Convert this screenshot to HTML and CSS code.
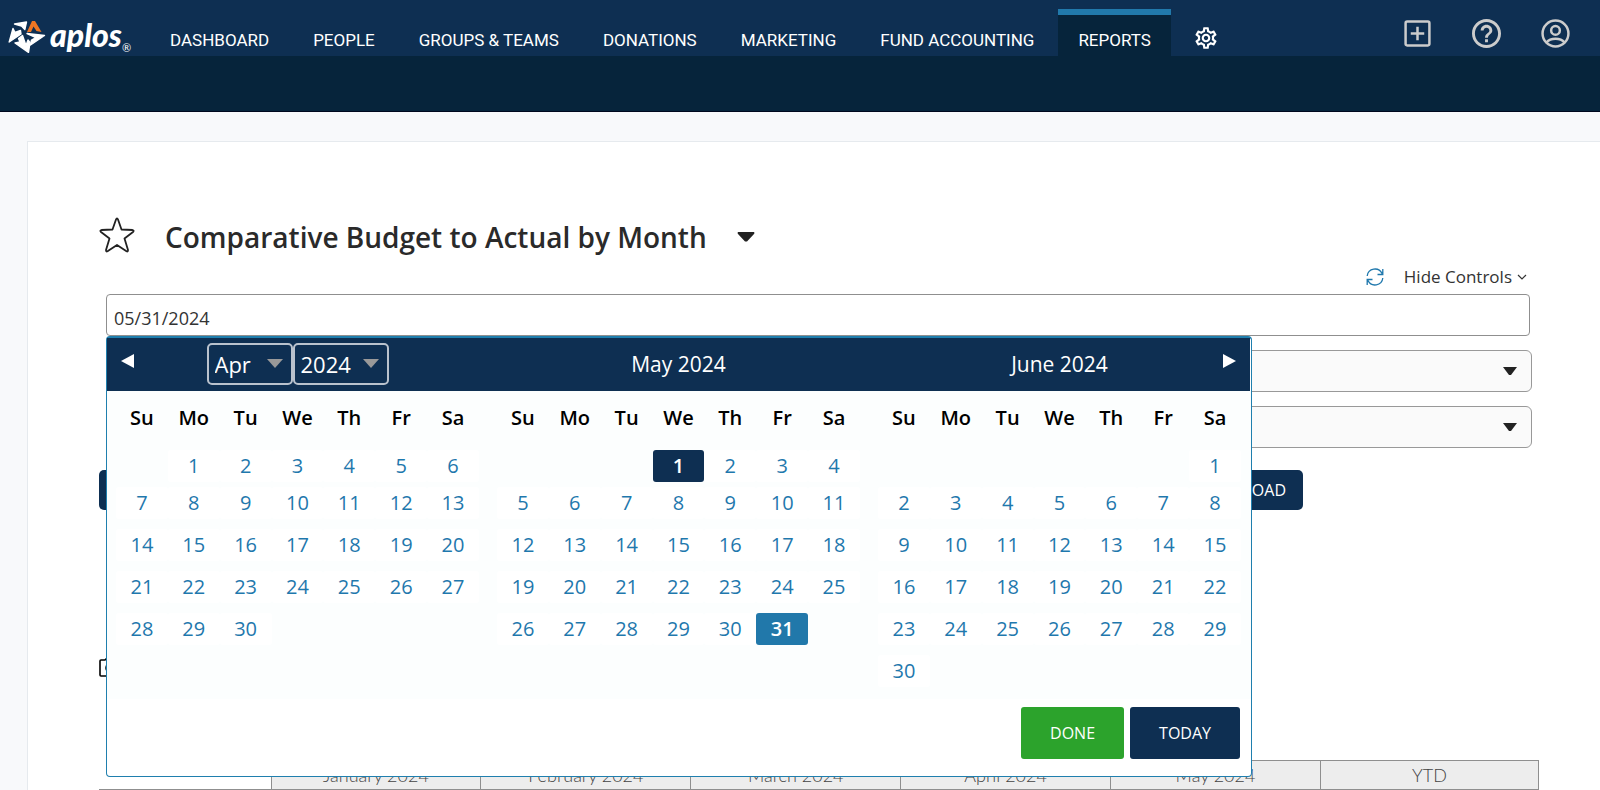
FILE: index.html
```html
<!DOCTYPE html>
<html lang="en">
<head>
<meta charset="utf-8">
<title>Comparative Budget to Actual by Month</title>
<link rel="stylesheet" href="styles.css">
</head>
<body>
<header class="topbar">
  <a class="logo" href="#" aria-label="aplos">
    <svg class="logo-mark" viewBox="0 0 38 34" aria-hidden="true">
      <g fill="#fff" stroke="#fff" stroke-width="1.400" stroke-linejoin="round">
        <path d="M6.500 4L18.500 2L16.800 9.500L13.500 6Z"/>
        <path d="M5 8.500L7 12.500L12.500 10.500L13 14L1.200 22Z"/>
        <path d="M19 13.500L36.500 15.500L22.500 25L23.500 20L28 17.500Z"/>
        <path d="M7 23L12 22L10.500 18.500L14.500 15.500L18 25.500L20 20L22 22.500L20.500 32.300Z"/>
      </g>
      <path d="M24 1H27L33.500 12L28.500 11L25.500 6.500L23 12L19 12Z" fill="#ee7623"/>
    </svg>
    <span class="logo-word">aplos</span><span class="logo-reg">®</span>
  </a>
  <nav class="nav">
    <a href="#">DASHBOARD</a>
    <a href="#">PEOPLE</a>
    <a href="#">GROUPS &amp; TEAMS</a>
    <a href="#">DONATIONS</a>
    <a href="#">MARKETING</a>
    <a href="#">FUND ACCOUNTING</a>
    <a href="#" class="active" aria-current="page">REPORTS</a>
    <a href="#" class="gear" aria-label="Settings">
      <svg viewBox="0 0 24 24" width="26" height="26" fill="#fff" aria-hidden="true"><path d="M19.43 12.98c.04-.32.07-.64.07-.98s-.03-.66-.07-.98l2.11-1.65c.19-.15.24-.42.12-.64l-2-3.46c-.09-.16-.26-.25-.44-.25-.06 0-.12.01-.17.03l-2.49 1c-.52-.4-1.08-.73-1.69-.98l-.38-2.65C14.46 2.18 14.25 2 14 2h-4c-.25 0-.46.18-.49.42l-.38 2.65c-.61.25-1.17.59-1.69.98l-2.49-1c-.06-.02-.12-.03-.18-.03-.17 0-.34.09-.43.25l-2 3.46c-.13.22-.07.49.12.64l2.11 1.65c-.04.32-.07.65-.07.98s.03.66.07.98l-2.11 1.65c-.19.15-.24.42-.12.64l2 3.46c.09.16.26.25.44.25.06 0 .12-.01.17-.03l2.49-1c.52.4 1.08.73 1.69.98l.38 2.65c.03.24.24.42.49.42h4c.25 0 .46-.18.49-.42l.38-2.65c.61-.25 1.17-.59 1.69-.98l2.49 1c.06.02.12.03.18.03.17 0 .34-.09.43-.25l2-3.46c.12-.22.07-.49-.12-.64l-2.11-1.65zm-1.98-1.71c.04.31.05.52.05.73s-.02.43-.05.73l-.14 1.13.89.7 1.08.84-.7 1.21-1.27-.51-1.04-.42-.9.68c-.43.32-.84.56-1.25.73l-1.06.43-.16 1.13-.2 1.35h-1.4l-.19-1.35-.16-1.13-1.06-.43c-.43-.18-.83-.41-1.23-.71l-.91-.7-1.06.43-1.27.51-.7-1.21 1.08-.84.89-.7-.14-1.13c-.03-.31-.05-.54-.05-.74s.02-.43.05-.73l.14-1.13-.89-.7-1.08-.84.7-1.21 1.27.51 1.04.42.9-.68c.43-.32.84-.56 1.25-.73l1.06-.43.16-1.13.2-1.35h1.39l.19 1.35.16 1.13 1.06.43c.43.18.83.41 1.23.71l.91.7 1.06-.43 1.27-.51.7 1.21-1.07.85-.89.7.14 1.13zM12 8c-2.21 0-4 1.79-4 4s1.79 4 4 4 4-1.79 4-4-1.79-4-4-4zm0 6c-1.1 0-2-.9-2-2s.9-2 2-2 2 .9 2 2-.9 2-2 2z"/></svg>
    </a>
  </nav>
  <div class="tools">
    <button type="button" aria-label="Add"><svg viewBox="0 0 28 28" fill="none" stroke="#ccc" stroke-width="2.400" aria-hidden="true"><rect x="2.500" y="2.500" width="23" height="23" rx="1.500"/><path d="M14 7.500v13M7.500 14h13"/></svg></button>
    <button type="button" aria-label="Help"><svg viewBox="2 2 20 20" fill="#ccc" aria-hidden="true"><path d="M11 18h2v-2h-2v2zm1-16C6.480 2 2 6.480 2 12s4.480 10 10 10 10-4.480 10-10S17.520 2 12 2zm0 18c-4.410 0-8-3.590-8-8s3.590-8 8-8 8 3.590 8 8-3.590 8-8 8zm0-14c-2.210 0-4 1.790-4 4h2c0-1.100.9-2 2-2s2 .9 2 2c0 2-3 1.750-3 5h2c0-2.250 3-2.500 3-5 0-2.210-1.790-4-4-4z"/></svg></button>
    <button type="button" aria-label="Account"><svg viewBox="0 0 28 28" fill="none" stroke="#ccc" stroke-width="2.400" aria-hidden="true"><circle cx="14" cy="14" r="12.500"/><circle cx="14" cy="11" r="4.200"/><path d="M5.500 22.500c2-2.600 5-3.500 8.500-3.500s6.500.9 8.500 3.500"/></svg></button>
  </div>
</header>
<div class="subbar"></div>

<main class="card">
  <div class="title-row">
    <button type="button" class="star" aria-label="Favorite"><svg viewBox="0 0 36 36" fill="none" stroke="#222" stroke-width="1.800" stroke-linejoin="round" aria-hidden="true"><path d="M18 1.500Q18.600 1.500 19 2.500L22.500 12.500L33.500 13Q35.500 13.500 34 15L25.500 21.500L29 33Q29 35 27.500 34.300L18 28L8.500 34.300Q7 35 7 33L10.500 21.500L2 15Q.5 13.500 2.500 13L13.500 12.500L17 2.500Q17.400 1.500 18 1.500Z"/></svg></button>
    <h1>Comparative Budget to Actual by Month</h1>
    <button type="button" class="caret-btn" aria-label="Choose report"><svg viewBox="0 0 18 10" width="18" height="10" aria-hidden="true"><path d="M1 0H17Q18 1 17 2L10 9.500H8L1 2Q0 1 1 0Z" fill="#222"/></svg></button>
  </div>

  <div class="controls">
    <button type="button" class="refresh" aria-label="Refresh"><svg viewBox="0 0 18 18" width="18" height="18" fill="none" stroke="#1f78ad" stroke-width="1.300" aria-hidden="true"><path d="M1.200 8A7.800 7.800 0 0 1 16 5.500M16.800 10A7.800 7.800 0 0 1 2 12.500M16.800 1V6.500H11.500M1.200 17V11.500H6.500"/></svg></button>
    <button type="button" class="hide">Hide Controls<svg viewBox="0 0 10 6" width="10" height="6" fill="none" stroke="#333" stroke-width="1.200" aria-hidden="true"><path d="M1 1L5 5L9 1"/></svg></button>
  </div>

  <div class="fields">
    <div class="date-field">
      <input class="date" type="text" value="05/31/2024" aria-label="Report date">
      <section class="picker" aria-label="Date picker">
        <div class="picker-head">
          <button type="button" class="prev" aria-label="Previous"><svg viewBox="0 0 13 14" width="13" height="14" aria-hidden="true"><path d="M13 0V14L0 7Z" fill="#fff"/></svg></button>
          <div class="month-name">
            <select class="month" aria-label="Month"><option>Apr</option></select>
            <select class="year" aria-label="Year"><option>2024</option></select>
          </div>
          <div class="month-name">May 2024</div>
          <div class="month-name">June 2024</div>
          <button type="button" class="next" aria-label="Next"><svg viewBox="0 0 13 14" width="13" height="14" aria-hidden="true"><path d="M0 0V14L13 7Z" fill="#fff"/></svg></button>
        </div>
        <div class="months">
          <table class="cal" data-start="1" data-days="30" aria-label="April 2024"></table>
          <table class="cal" data-start="3" data-days="31" data-now="1" data-selected="31" aria-label="May 2024"></table>
          <table class="cal" data-start="6" data-days="30" aria-label="June 2024"></table>
        </div>
        <div class="picker-foot">
          <button type="button" class="done">DONE</button>
          <button type="button" class="today">TODAY</button>
        </div>
      </section>
    </div>
    <select class="filter" aria-label="Filter"><option></option></select>
    <select class="filter" aria-label="Grouping"><option></option></select>
  </div>

  <div class="actions">
    <button type="button" class="action" aria-label="Run"></button>
    <button type="button" class="action">DOWNLOAD</button>
  </div>

  <div class="snapshot">
    <svg viewBox="0 0 24 20" width="24" height="20" fill="none" stroke="#000" stroke-width="1.600" aria-hidden="true"><path d="M1 4Q1 3 2 3H6L8 1H15L17 3H22Q23 3 23 4V18Q23 19 22 19H2Q1 19 1 18Z"/><circle cx="12" cy="11" r="5"/></svg>
  </div>

  <table class="report">
    <colgroup><col class="c-name"><col><col><col><col><col><col class="c-ytd"></colgroup>
    <thead><tr><td></td><th>January 2024</th><th>February 2024</th><th>March 2024</th><th>April 2024</th><th>May 2024</th><th>YTD</th></tr></thead>
  </table>
</main>
<script src="calendar.js"></script>
</body>
</html>
```
FILE: styles.css
```css
* { box-sizing: border-box; }
body { display: flex; flex-direction: column; margin: 0; min-height: 100vh; background: #f8f9fb; color: #222; font-family: "Open Sans", "Noto Sans", sans-serif; }
button { border: 0; padding: 0; background: none; color: inherit; font: inherit; cursor: pointer; }
svg { display: block; }

.topbar { display: flex; align-items: flex-end; height: 56px; padding: 0 30px 0 8px; background: #0e2f52; }
.logo { display: flex; align-items: flex-end; width: 142px; height: 56px; color: #fff; text-decoration: none; font-family: Lato, sans-serif; }
.logo-mark { width: 38px; height: 34px; margin-bottom: 2px; }
.logo-word { margin: 0 0 1px 4px; font-size: 32px; line-height: 40px; font-weight: 900; font-style: italic; }
.logo-reg { margin-bottom: 2px; font-size: 11px; line-height: 12px; }
.nav { display: flex; align-items: flex-end; gap: 4px; }
.nav a { display: flex; align-items: center; height: 47px; padding: 8px 20px 0; border-top: 6px solid transparent; color: #fff; font: 17px/24px Roboto, sans-serif; text-decoration: none; white-space: nowrap; }
.nav a.active { background: #06243b; border-top-color: #2179ab; }
.nav a.gear { padding: 4px 18px 0; }
.tools { display: flex; gap: 40px; align-items: center; margin: 0 0 8px auto; }
.tools svg { width: 29px; height: 29px; }
.subbar { height: 56px; background: #06243b; border-bottom: 1px solid #00081e; }

.card { flex: 1; margin: 29px 0 0 27px; padding: 66px 61px 0 71px; background: #fff; border: 1px solid #e6eaee; border-right: 0; border-bottom: 0; }
.title-row { display: flex; align-items: center; height: 57px; }
.star svg { width: 36px; height: 36px; }
.star { margin-bottom: 4px; }
h1 { margin: 0 30px; font-size: 28px; line-height: 40px; font-weight: 600; color: #2a2a2a; white-space: nowrap; }
.controls { display: flex; justify-content: flex-end; align-items: center; gap: 20px; height: 24px; padding-right: 12px; margin-bottom: 5px; }
.hide { display: flex; align-items: center; gap: 5px; color: #333; font-size: 17px; line-height: 24px; }

.fields { display: flex; flex-direction: column; gap: 14px; padding: 0 7px; }
.date-field { position: relative; margin-right: 2px; }
.date { display: block; width: 100%; height: 42px; padding: 6px 7px 0; border: 1px solid #8f8f8f; border-radius: 4px; background: #fff; color: #333; font: 18px "Open Sans", sans-serif; }
.filter { width: 100%; height: 42px; border: 1px solid #999; border-radius: 6px; appearance: none; background: #fafafa url("data:image/svg+xml,%3Csvg xmlns='http://www.w3.org/2000/svg' viewBox='0 0 14 8'%3E%3Cpath d='M0 0H14L8 8H6Z' fill='%23222'/%3E%3C/svg%3E") no-repeat right 14px center / 14px 8px; }

.picker { position: absolute; top: 42px; left: 0; z-index: 5; width: 1146px; max-width: 82vw; background: #fff; border: 1px solid #1f7fae; border-top-width: 2px; border-radius: 4px; }
.picker-head { position: relative; display: grid; grid-template-columns: repeat(3, 1fr); align-items: center; height: 53px; padding-bottom: 2px; margin-right: 1px; background: #0e2f52; color: #fff; }
.month-name { display: flex; justify-content: center; font-size: 21px; line-height: 30px; }
.month-name select { height: 42px; padding: 0 6px; border: 2px solid #b9c2cd; border-radius: 5px; appearance: none; color: #fff; font: 22px "Open Sans", sans-serif; background: url("data:image/svg+xml,%3Csvg xmlns='http://www.w3.org/2000/svg' viewBox='0 0 16 9'%3E%3Cpath d='M0 0H16L8 9Z' fill='%23999'/%3E%3C/svg%3E") no-repeat right 8px center / 16px 9px; }
.month { width: 86px; }
.year { width: 96px; }
.prev, .next { position: absolute; top: 16px; }
.prev { left: 14px; }
.next { right: 14px; }
.months { display: grid; grid-template-columns: repeat(3, 1fr); align-items: start; min-height: 308px; padding-right: 1px; background: #fcfefe; }
.cal { width: calc(100% - 18px); margin: 0 9px; border-collapse: collapse; table-layout: fixed; }
.cal th { height: 59px; padding: 0 0 6px; color: #000; font-size: 20px; line-height: 28px; font-weight: 600; }
.cal td { padding: 5px 0; }
.cal tbody tr:first-child td { padding: 0; }
.day { display: block; width: 100%; height: 32px; border-radius: 3px; background: #fff; color: #1f78ad; font-size: 20px; line-height: 32px; text-align: center; }
.day.now { background: #0e2f52; color: #fff; font-weight: 600; }
.day.selected { background: #2178aa; color: #fff; font-weight: 600; }
.picker-foot { display: flex; justify-content: flex-end; gap: 6px; padding: 8px 11px 17px; }
.picker-foot button { height: 52px; padding: 0 29px; border-radius: 3px; color: #fff; font-size: 16px; }
.picker-foot .done { background: #2ca32c; }
.picker-foot .today { background: #0e2f52; }

.actions { display: flex; justify-content: space-between; width: 1204px; max-width: 86vw; margin-top: 22px; }
.action { height: 40px; min-width: 120px; padding: 0 17px; border-radius: 5px; background: #0e2f52; color: #fff; font-size: 16px; }
.snapshot { margin-top: 147px; }
.report { width: 100%; margin-top: 83px; border-collapse: collapse; table-layout: fixed; font: 18px/28px Lato, sans-serif; color: #444; }
.report th { height: 28px; padding: 0; border: 1px solid #8f8f8f; background: #ededed; font-weight: 300; }
.report td { padding: 0; border-bottom: 1px solid #8f8f8f; }
.c-name { width: 172px; }
.c-ytd { width: 218px; }
```
FILE: calendar.js
```js
const names = ["Su", "Mo", "Tu", "We", "Th", "Fr", "Sa"];
document.querySelectorAll(".cal").forEach(table => {
  const start = +table.dataset.start;
  const days = +table.dataset.days;
  const head = table.createTHead().insertRow();
  names.forEach(name => {
    const th = document.createElement("th");
    th.scope = "col";
    th.textContent = name;
    head.append(th);
  });
  const body = table.createTBody();
  for (let first = 1 - start; first <= days; first += 7) {
    const row = body.insertRow();
    for (let day = first; day < first + 7; day++) {
      const cell = row.insertCell();
      if (day < 1 || day > days) continue;
      const button = document.createElement("button");
      button.type = "button";
      button.className = "day";
      if (day === +table.dataset.now) button.classList.add("now");
      if (day === +table.dataset.selected) button.classList.add("selected");
      button.textContent = day;
      cell.append(button);
    }
  }
});
```
